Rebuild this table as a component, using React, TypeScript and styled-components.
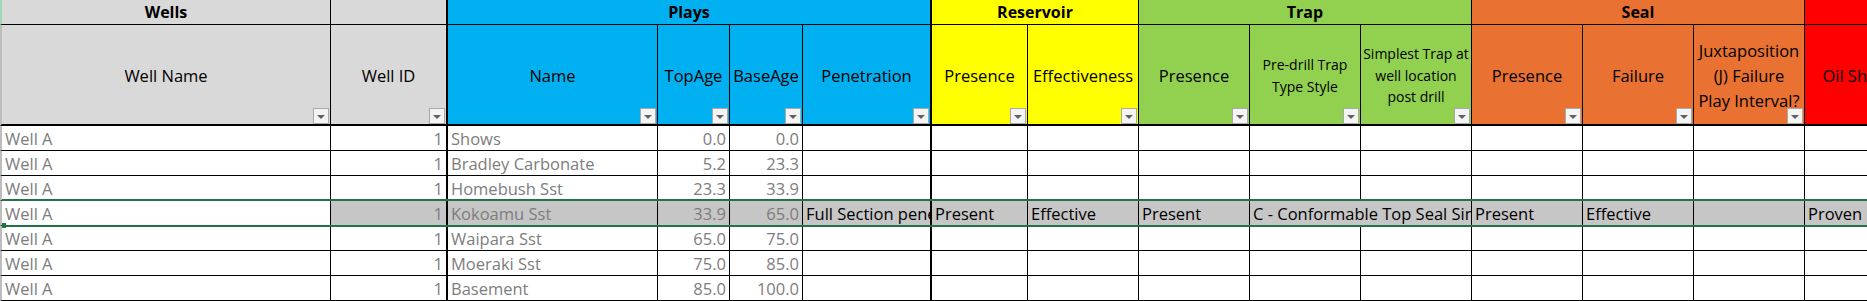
import React from 'react';
import styled, { createGlobalStyle, css } from 'styled-components';

const GlobalStyle = createGlobalStyle`
  html, body { margin: 0; padding: 0; background: #ffffff; overflow: hidden; }
  body { font-family: "Open Sans", "Liberation Sans", sans-serif; }
`;

const GRAY = '#D9D9D9';
const BLUE = '#00B0F0';
const YELLOW = '#FFFF00';
const GREEN = '#92D050';
const ORANGE = '#E97132';
const RED = '#FF0000';
const SELECTED = '#C6C6C6';
const EXCEL_GREEN = '#217346';

type Column = {
  label: string;
  width: number;
  bg: string;
  small?: boolean;
  thick?: boolean;
  align?: 'left' | 'right';
  muted?: boolean;
};

const columns: Column[] = [
  { label: 'Well Name', width: 331, bg: GRAY, muted: true },
  { label: 'Well ID', width: 117, bg: GRAY, thick: true, align: 'right', muted: true },
  { label: 'Name', width: 210, bg: BLUE, muted: true },
  { label: 'TopAge', width: 72, bg: BLUE, align: 'right', muted: true },
  { label: 'BaseAge', width: 73, bg: BLUE, align: 'right', muted: true },
  { label: 'Penetration', width: 129, bg: BLUE, thick: true },
  { label: 'Presence', width: 96, bg: YELLOW },
  { label: 'Effectiveness', width: 111, bg: YELLOW },
  { label: 'Presence', width: 111, bg: GREEN },
  { label: 'Pre-drill Trap\nType Style', width: 111, bg: GREEN, small: true },
  { label: 'Simplest Trap at\nwell location\npost drill', width: 111, bg: GREEN, small: true },
  { label: 'Presence', width: 111, bg: ORANGE },
  { label: 'Failure', width: 111, bg: ORANGE },
  { label: 'Juxtaposition\n(J) Failure\nPlay Interval?', width: 111, bg: ORANGE },
  { label: 'Oil Shows', width: 111, bg: RED },
  { label: 'Gas Shows', width: 111, bg: RED },
];

type Group = { label: string; span: number; bg: string; thick?: boolean };

const groups: Group[] = [
  { label: 'Wells', span: 1, bg: GRAY },
  { label: '', span: 1, bg: GRAY, thick: true },
  { label: 'Plays', span: 4, bg: BLUE, thick: true },
  { label: 'Reservoir', span: 2, bg: YELLOW },
  { label: 'Trap', span: 3, bg: GREEN },
  { label: 'Seal', span: 3, bg: ORANGE },
  { label: 'Charge', span: 2, bg: RED },
];

const plays: [string, string, string][] = [
  ['Shows', '0.0', '0.0'],
  ['Bradley Carbonate', '5.2', '23.3'],
  ['Homebush Sst', '23.3', '33.9'],
  ['Kokoamu Sst', '33.9', '65.0'],
  ['Waipara Sst', '65.0', '75.0'],
  ['Moeraki Sst', '75.0', '85.0'],
  ['Basement', '85.0', '100.0'],
];

const SELECTED_ROW = 3;

/* Text of the highlighted play row, by column index; `span` lets a long
   value run on into the empty cell beside it, as Excel does. */
const selectedDetails: Record<number, { text: string; span?: number }> = {
  5: { text: 'Full Section penetration' },
  6: { text: 'Present' },
  7: { text: 'Effective' },
  8: { text: 'Present' },
  9: { text: 'C - Conformable Top Seal Simple', span: 2 },
  11: { text: 'Present' },
  12: { text: 'Effective' },
  14: { text: 'Proven oil shows' },
};

const Page = styled.div`
  position: relative;
  width: 1867px;
  height: 301px;
  overflow: hidden;
`;

const Sheet = styled.div<{ $template: string }>`
  display: grid;
  grid-template-columns: ${p => p.$template};
  width: max-content;
  font-size: 16.5px;
  color: #000;
`;

const edgeBorder = css<{ $edge?: boolean; $edgeColor?: string }>`
  ${p => p.$edge && css`border-left: 2px solid ${p.$edgeColor ?? '#BDBDBD'};`}
`;

const GroupCell = styled.div<{ $bg: string; $span: number; $thick?: boolean; $edge?: boolean; $edgeColor?: string }>`
  grid-column: span ${p => p.$span};
  box-sizing: border-box;
  height: 25px;
  background: ${p => p.$bg};
  border-bottom: 1px solid #000;
  border-right: ${p => (p.$thick ? 2 : 1)}px solid #000;
  ${edgeBorder};
  font-size: 16px;
  font-weight: 700;
  line-height: 24px;
  text-align: center;
  white-space: nowrap;
  overflow: hidden;
`;

const HeaderCell = styled.div<{ $bg: string; $thick?: boolean; $edge?: boolean }>`
  box-sizing: border-box;
  height: 101px;
  background: ${p => p.$bg};
  border-bottom: 2px solid #000;
  border-right: ${p => (p.$thick ? 2 : 1)}px solid #000;
  ${edgeBorder};
  display: grid;
  grid-template: 1fr / 1fr;
  overflow: hidden;

  & > * {
    grid-area: 1 / 1;
  }
`;

const HeaderLabel = styled.span<{ $small?: boolean }>`
  place-self: center;
  padding-top: 2px;
  text-align: center;
  white-space: pre;
  font-size: ${p => (p.$small ? 14 : 16.5)}px;
  line-height: ${p => (p.$small ? 21.5 : 25)}px;
`;

const FilterButton = styled.span`
  align-self: end;
  justify-self: end;
  margin-right: 1px;
  width: 16px;
  height: 16px;
  box-sizing: border-box;
  border: 1px solid #A9A9A9;
  background: #F4F4F4;
  display: flex;
  align-items: center;
  justify-content: center;

  &::after {
    content: '';
    margin-top: 1px;
    border-left: 4px solid transparent;
    border-right: 4px solid transparent;
    border-top: 4px solid #606060;
  }
`;

const DataCell = styled.div<{
  $align?: 'left' | 'right';
  $muted?: boolean;
  $selected?: boolean;
  $thick?: boolean;
  $edge?: boolean;
  $span?: number;
}>`
  grid-column: span ${p => p.$span ?? 1};
  box-sizing: border-box;
  height: 25px;
  padding: 1px 3px 0 3px;
  background: ${p => (p.$selected ? SELECTED : '#ffffff')};
  color: ${p => (p.$muted ? '#7D7D7D' : '#000000')};
  border-bottom: 1px solid #000;
  border-right: ${p => (p.$thick ? 2 : 1)}px solid #000;
  ${edgeBorder};
  text-align: ${p => p.$align ?? 'left'};
  line-height: 23px;
  white-space: nowrap;
  overflow: hidden;
`;

/* Excel's green selection frame, drawn over the highlighted row. */
const Selection = styled.div`
  position: absolute;
  left: 2px;
  right: 0;
  top: 199px;
  height: 28px;
  box-sizing: border-box;
  border-top: 2px solid ${EXCEL_GREEN};
  border-bottom: 2px solid ${EXCEL_GREEN};
  pointer-events: none;
`;

const FillHandle = styled.span`
  position: absolute;
  left: 0;
  bottom: -3px;
  width: 4px;
  height: 5px;
  background: ${EXCEL_GREEN};
`;

function rowValues(i: number): string[] {
  const [name, top, base] = plays[i];
  return ['Well A', '1', name, top, base];
}

function PlayRow({ index }: { index: number }) {
  const values = rowValues(index);
  const selected = index === SELECTED_ROW;
  const cells: React.ReactNode[] = [];
  let ci = 0;
  while (ci < columns.length) {
    const c = columns[ci];
    const detail = selected ? selectedDetails[ci] : undefined;
    const span = detail?.span ?? 1;
    const last = columns[ci + span - 1];
    const text = ci < values.length ? values[ci] : detail?.text ?? '';
    cells.push(
      <DataCell
        key={ci}
        $align={c.align}
        $muted={c.muted}
        $selected={selected && ci > 0}
        $thick={last.thick}
        $edge={ci === 0}
        $span={span}
      >
        {text}
      </DataCell>
    );
    ci += span;
  }
  return <>{cells}</>;
}

export default function App() {
  const template = columns.map(c => `${c.width}px`).join(' ');

  return (
    <Page>
      <GlobalStyle />
      <Sheet $template={template}>
        {groups.map((g, i) => (
          <GroupCell
            key={`g${i}`}
            $bg={g.bg}
            $span={g.span}
            $thick={g.thick}
            $edge={i === 0}
            $edgeColor="#9ED8B4"
          >
            {g.label}
          </GroupCell>
        ))}

        {columns.map((c, i) => (
          <HeaderCell key={`h${i}`} $bg={c.bg} $thick={c.thick} $edge={i === 0}>
            <HeaderLabel $small={c.small}>{c.label}</HeaderLabel>
            <FilterButton />
          </HeaderCell>
        ))}

        {plays.map((_, r) => (
          <PlayRow key={`r${r}`} index={r} />
        ))}
      </Sheet>
      <Selection>
        <FillHandle />
      </Selection>
    </Page>
  );
}
